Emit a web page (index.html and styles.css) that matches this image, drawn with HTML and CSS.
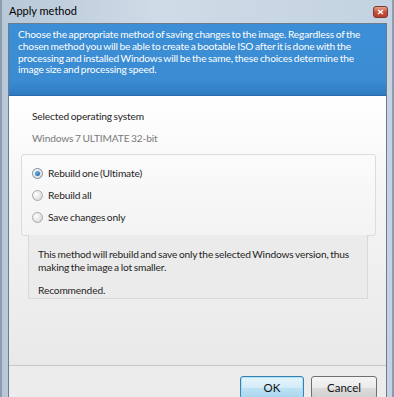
FILE: index.html
```html
<!DOCTYPE html>
<html>
  <head>
    <meta charset="utf-8">
    <title>Apply method</title>
    <link rel="stylesheet" href="styles.css">
  </head>
  <body>
    <div class="window">
      <div class="titlebar">
        <span class="title">Apply method</span>
        <span class="close">
          <svg width="7" height="6" viewBox="0 0 7 6"><path d="M1 1 L6 5 M6 1 L1 5" stroke="#fff" stroke-width="1.6"/></svg>
        </span>
      </div>
      <div class="client">
        <div class="header">
          Choose the appropriate method of saving changes to the image. Regardless of the
          chosen method you will be able to create a bootable ISO after it is done with the
          processing and installed Windows will be the same, these choices determine the
          image size and processing speed.
        </div>
        <div class="content">
          <p class="label">Selected operating system</p>
          <p class="os_name">Windows 7 ULTIMATE 32-bit</p>
          <div class="group">
            <label class="option"><span class="radio checked"></span>Rebuild one (Ultimate)</label>
            <label class="option"><span class="radio"></span>Rebuild all</label>
            <label class="option"><span class="radio"></span>Save changes only</label>
          </div>
          <div class="description">
            <p>This method will rebuild and save only the selected Windows version, thus making the image a lot smaller.</p>
            <p>Recommended.</p>
          </div>
        </div>
        <div class="footer">
          <button class="button default">OK</button>
          <button class="button">Cancel</button>
        </div>
      </div>
    </div>
  </body>
</html>
```

FILE: styles.css
```css
html, body {
  margin: 0;
  padding: 0;
  overflow: hidden;
}

body {
  font-family: Lato, 'Liberation Sans', sans-serif;
  font-size: 10.2px;
  letter-spacing: -0.15px;
  word-spacing: -0.8px;
  color: #1e1e1e;
}

.window {
  width: 394px;
  height: 397px;
  overflow: hidden;
  box-sizing: border-box;
  display: flex;
  flex-direction: column;
  padding: 0 5px 0 6px;
  background: linear-gradient(to right, #b8c8d8, #cfdbe6 40%, #c4d3e1);
  border-left: 2px solid #8c9cac;
  border-right: 2px solid #8c9cac;
}

.titlebar {
  height: 23px;
  flex: none;
  display: flex;
  align-items: center;
  justify-content: space-between;
  padding: 0 0 0 1px;
}

.title {
  font-size: 11px;
  letter-spacing: 0;
  word-spacing: 0;
  color: #000;
  margin-top: -2px;
}

.close {
  width: 15px;
  height: 12px;
  margin: 0 -1px 0 0;
  border: 1px solid #7a3a30;
  border-radius: 3px;
  background: linear-gradient(#e8a08e, #c8503a 50%, #b8402c);
  display: flex;
  align-items: center;
  justify-content: center;
  box-sizing: border-box;
}

.client {
  flex: 1;
  display: flex;
  flex-direction: column;
  border: 1px solid #6c7c8c;
  border-bottom: none;
  background: #f0f0f0;
}

.header {
  height: 72px;
  flex: none;
  box-sizing: border-box;
  padding: 5px 8px 0 9px;
  line-height: 11.8px;
  color: #fff;
  background: linear-gradient(#3c8fd6, #3a8bd2 80%, #2f7bc2);
  border-bottom: 1px solid #2a6aa8;
}

.content {
  height: 269px;
  flex: none;
  box-sizing: border-box;
  padding: 13px 10px 0 12px;
  background: linear-gradient(#ffffff, #f4f4f4 40%, #e9e9e9);
}

.content p {
  margin: 0;
}

.label {
  line-height: 14px;
  padding-left: 11px;
}

.os_name {
  line-height: 14px;
  margin-top: 8px !important;
  padding-left: 11px;
  color: #7a7a7a;
}

.group {
  margin-top: 9px;
  height: 82px;
  box-sizing: border-box;
  padding: 11px 10px 0 10px;
  border: 1px solid #dcdcdc;
  border-radius: 3px;
  background: linear-gradient(#fbfbfb, #f3f3f3);
  display: flex;
  flex-direction: column;
  gap: 8px;
}

.option {
  display: flex;
  align-items: center;
  height: 14px;
}

.radio {
  width: 11px;
  height: 11px;
  border-radius: 50%;
  border: 1px solid #a9a9a9;
  background: radial-gradient(circle at 35% 35%, #ffffff, #dedede 70%, #cfcfcf);
  margin-right: 5px;
  display: flex;
  align-items: center;
  justify-content: center;
  box-sizing: border-box;
}

.radio.checked {
  border-color: #7e8ea0;
}

.radio.checked::after {
  content: "";
  width: 5px;
  height: 5px;
  border-radius: 50%;
  background: radial-gradient(circle at 40% 35%, #6ab0e0, #1d5a96);
}

.description {
  margin: -1px 8px 0 7px;
  height: 64px;
  box-sizing: border-box;
  padding: 13px 9px 0 9px;
  border: 1px solid #d8d8d8;
  border-top: none;
  background: #ebebeb;
  line-height: 12.5px;
}

.description p + p {
  margin-top: 11px;
}

.footer {
  flex: 1;
  border-top: 1px solid #c8c8c8;
  background: #ececec;
  display: flex;
  justify-content: flex-end;
  align-items: flex-start;
  gap: 7px;
  padding: 10px 9px 0 0;
}

.button {
  font-family: Lato, 'Liberation Sans', sans-serif;
  font-size: 11.5px;
  color: #111;
  height: 23px;
  width: 66px;
  flex: none;
  border: 1px solid #707070;
  border-radius: 3px;
  background: linear-gradient(#f4f4f4, #ebebeb 50%, #dcdcdc 51%, #d0d0d0);
  padding: 0;
}

.button.default {
  width: 64px;
  border-color: #3c7fb1;
  background: linear-gradient(#e6f4fb, #d4ecf8 50%, #bde2f5 51%, #a8d6ef);
  box-shadow: inset 0 0 0 1px #a8e0f8;
}
```
